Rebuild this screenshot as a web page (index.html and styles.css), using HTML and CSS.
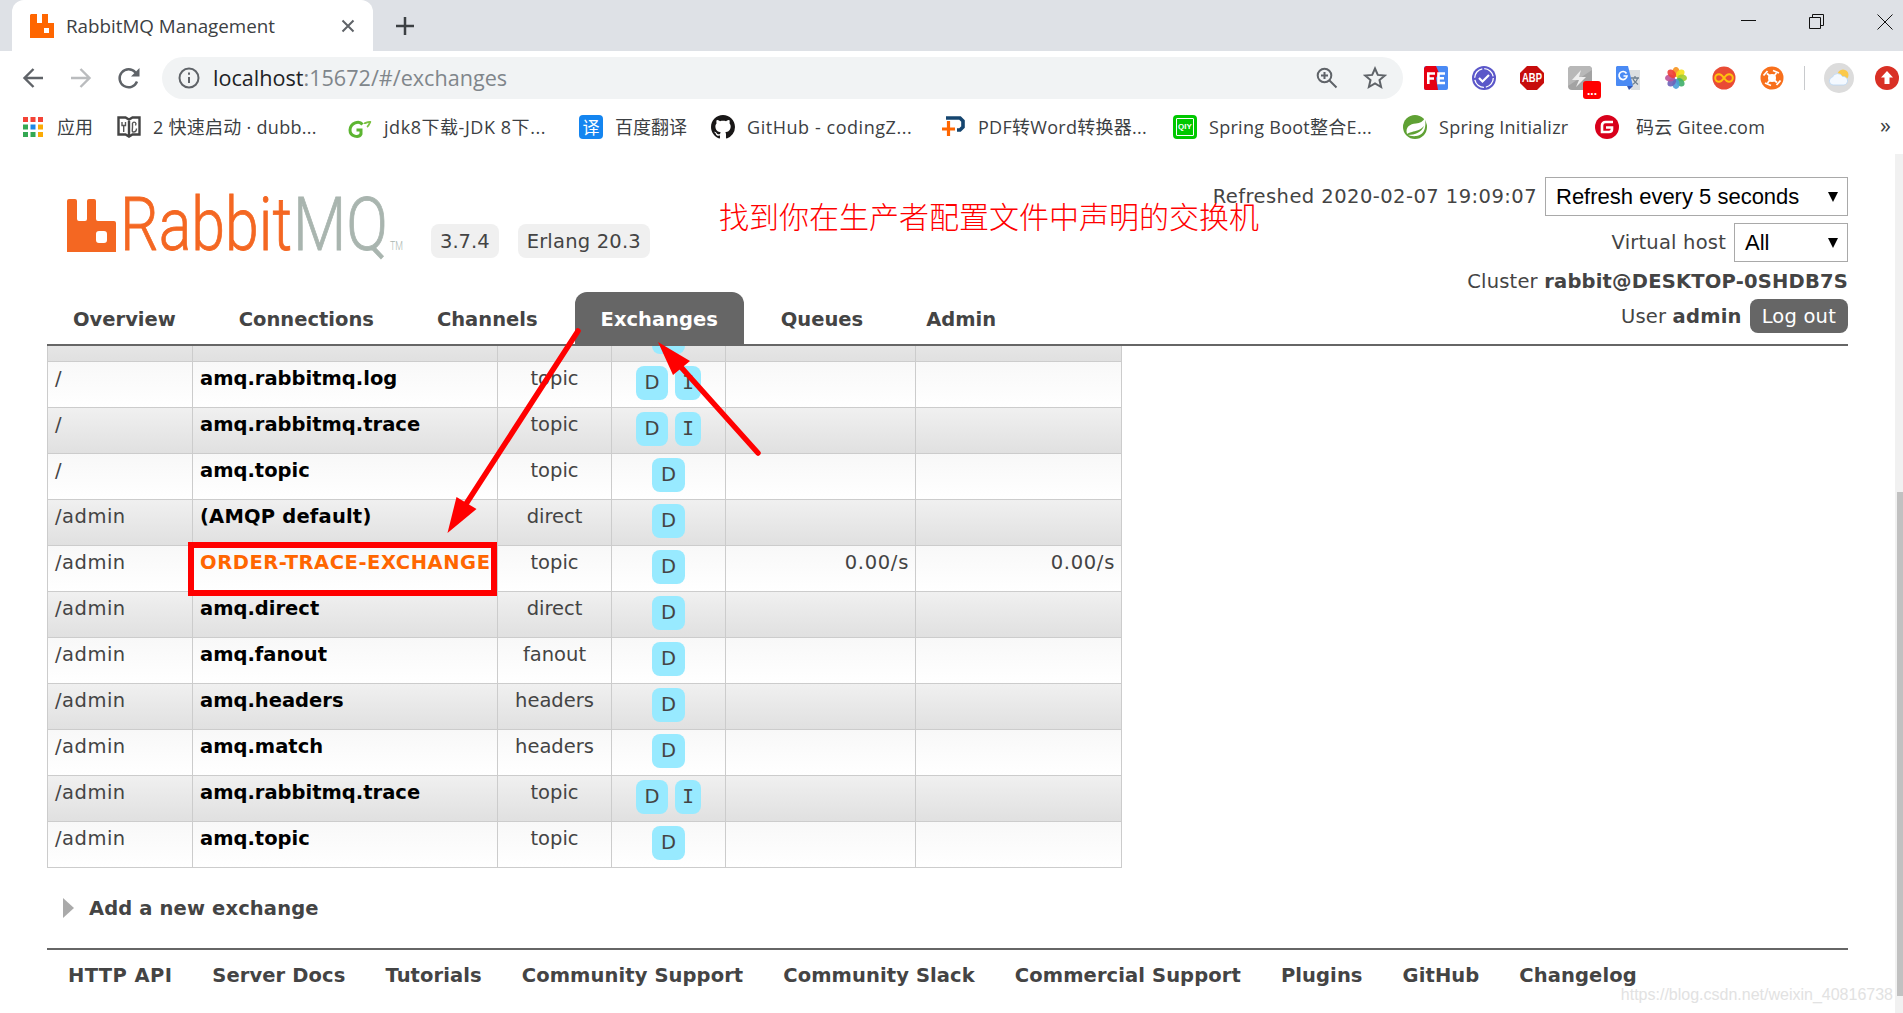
FILE: index.html
```html
<!DOCTYPE html>
<html>
<head>
	<meta charset="utf-8">
	<title>RabbitMQ Management</title>
	<link rel="stylesheet" href="styles.css">
</head>
<body>

	<!-- browser -->
	<div class="tabstrip">
		<div class="tab">
			<svg class="favicon" viewBox="0 0 24 24"><path fill="#ff6600" d="M1 0h6v9h5V0h6v9h6v15H0V1zM14 14v5h5v-5z" fill-rule="evenodd"/></svg>
			<span class="tab-title">RabbitMQ Management</span>
			<svg class="tab-close" viewBox="0 0 14 14"><path d="M1.500 1.500l11 11M12.500 1.500l-11 11"/></svg>
		</div>
		<svg class="tab-new" viewBox="0 0 18 18"><path d="M9 0v18M0 9h18"/></svg>
		<div class="window-buttons">
			<svg viewBox="0 0 16 16"><path d="M0 6.500h15"/></svg>
			<svg viewBox="0 0 16 16"><path d="M.5 3.500h11v11H.5zM3.500 3V.5h11v11H12"/></svg>
			<svg viewBox="0 0 16 16"><path d="M.5.5l15 15M15.500.5l-15 15"/></svg>
		</div>
	</div>

	<div class="toolbar">
		<svg class="nav-icon" viewBox="0 0 24 24"><path d="M22 12H4M12.500 3L3.500 12l9 9"/></svg>
		<svg class="nav-icon off" viewBox="0 0 24 24"><path d="M2 12h18M11.500 3l9 9-9 9"/></svg>
		<svg class="nav-icon" viewBox="0 0 24 24"><path d="M20 15.500A9 9 0 1 1 18.500 6.500L21 9"/><path d="M22.500 2v8.500H14z" fill="#5f6368" stroke="none"/></svg>
		<div class="address">
			<svg class="info" viewBox="0 0 22 22"><circle cx="11" cy="11" r="9.500"/><path d="M11 10v6M11 5.500v2.300"/></svg>
			<span class="url"><b>localhost</b>:15672/#/exchanges</span>
			<svg class="zoom" viewBox="0 0 22 22"><circle cx="8.500" cy="8.500" r="6.800"/><path d="M13.500 13.500l7 7M8.500 5v7M5 8.500h7"/></svg>
			<svg class="star" viewBox="0 0 24 24"><path d="M12 2.500l2.800 6.400 7 .6-5.300 4.600 1.600 6.900-6.100-3.700L5.900 21l1.600-6.900-5.300-4.600 7-.6z"/></svg>
		</div>
		<div class="extensions">
			<svg viewBox="0 0 24 24"><rect width="24" height="24" rx="2" fill="#4a8af4"/><path fill="#e60012" d="M2 0h10l3 7-3 5 2 12H2a2 2 0 0 1-2-2V2z"/><path d="M4.300 18V7.500H11M4 12.500h6M21 7.500h-6.500V17H21M14 12.300h6" fill="none" stroke="#fff" stroke-width="2.600"/></svg>
			<svg viewBox="0 0 24 24"><circle cx="12" cy="12" r="12" fill="#5b57c9"/><circle cx="12" cy="12" r="9.300" fill="none" stroke="#fff" stroke-width="1.300" stroke-dasharray="12.600 2"/><path d="M7 12l3.500 3.500L17 9" fill="none" stroke="#fff" stroke-width="2.200"/></svg>
			<svg viewBox="0 0 24 24"><path fill="#c70d0c" d="M7 0h10l7 7v10l-7 7H7l-7-7V7z"/><text x="2" y="16" textLength="20" lengthAdjust="spacingAndGlyphs" class="abp">ABP</text></svg>
			<div class="ext-badged">
				<svg viewBox="0 0 24 24"><rect width="24" height="24" rx="4" fill="#a3a3a3"/><path fill="#b8b8b8" d="M4 0h16a4 4 0 0 1 4 4L0 20V4a4 4 0 0 1 4-4z"/><path fill="#eee" d="M13 4L4 14h7l-3 7 10-10h-7z"/></svg>
				<span class="ext-badge">...</span>
			</div>
			<svg viewBox="0 0 24 24"><path fill="#dcdfe1" d="M9 4h15v20H15z"/><path fill="#4a8af4" d="M1 0h11l5 20H1a1 1 0 0 1-1-1V1z"/><path fill="#3357b5" d="M11 20h6l-4 4z"/><path d="M10.500 7.500A4 4 0 1 0 11 10H7.500" fill="none" stroke="#fff" stroke-width="1.700"/><path d="M15 12h8M19 10v2M21.500 12c-.5 3-2.500 5-5 6.500M17 13c1 2.500 3 4 5 5.500" fill="none" stroke="#6d7f8f" stroke-width="1.300"/></svg>
			<svg viewBox="0 0 24 24"><g fill-opacity=".9"><ellipse cx="12" cy="6" rx="3.600" ry="5" fill="#f7941d"/><ellipse cx="12" cy="6" rx="3.600" ry="5" fill="#f5e11a" transform="rotate(45 12 12)"/><ellipse cx="12" cy="6" rx="3.600" ry="5" fill="#a3cc2e" transform="rotate(90 12 12)"/><ellipse cx="12" cy="6" rx="3.600" ry="5" fill="#3fae6a" transform="rotate(135 12 12)"/><ellipse cx="12" cy="6" rx="3.600" ry="5" fill="#4a9fd8" transform="rotate(180 12 12)"/><ellipse cx="12" cy="6" rx="3.600" ry="5" fill="#6d62b8" transform="rotate(225 12 12)"/><ellipse cx="12" cy="6" rx="3.600" ry="5" fill="#bd5399" transform="rotate(270 12 12)"/><ellipse cx="12" cy="6" rx="3.600" ry="5" fill="#ee3e36" transform="rotate(315 12 12)"/></g></svg>
			<svg viewBox="0 0 24 24"><circle cx="12" cy="12" r="11.500" fill="#e94b35"/><path d="M12 12c-2-3-3.500-3.800-5-3.800a3.800 3.800 0 0 0 0 7.600c1.500 0 3-.8 5-3.800s3.500-3.800 5-3.800a3.800 3.800 0 0 1 0 7.600c-1.500 0-3-.8-5-3.800z" fill="none" stroke="#ffc20e" stroke-width="2"/></svg>
			<svg viewBox="0 0 24 24"><circle cx="12" cy="12" r="11.500" fill="#f8701c"/><circle cx="12" cy="12" r="4" fill="#fff"/><path d="M7 7.500l3 2.500M17 16.500L14 14M16.500 7L14 10M7.500 17l2.500-3M3.500 9.500L7.500 5M20.500 14.500l-4 4.500M13 4.500l6 2.500M11 19.500L5 17" fill="none" stroke="#fff" stroke-width="1.800"/></svg>
			<span class="sep"></span>
			<svg class="avatar" viewBox="0 0 30 30"><circle cx="15" cy="15" r="15" fill="#dcdcdc"/><circle cx="19" cy="12" r="5.500" fill="#fbc94a"/><path fill="#f4f9ff" stroke="#b9d6f2" stroke-width=".8" d="M9 22a4 4 0 0 1-.5-7.900 5.500 5.500 0 0 1 10-.6A4.300 4.300 0 0 1 20 22z"/></svg>
			<svg viewBox="0 0 24 24"><circle cx="12" cy="12" r="12" fill="#d93025"/><path fill="#fff" d="M12 5l6 6.500h-3.500V18h-5v-6.500H6z"/></svg>
		</div>
	</div>

	<div class="bookmarks">
		<div class="bm w94"><svg viewBox="0 0 24 24"><path fill="#f44336" d="M0 2h5v5H0zM7.500 2h5v5h-5zM15 2h5v5h-5z"/><path fill="#34a853" d="M0 9.500h5v5H0zM0 17h5v5H0zM7.500 17h5v5h-5z"/><path fill="#1e88e5" d="M7.500 9.500h5v5h-5z"/><path fill="#fbab05" d="M15 9.500h5v5h-5zM15 17h5v5h-5z"/></svg><span>应用</span></div>
		<div class="bm w231"><svg viewBox="0 0 24 24"><path d="M1.500 2.500h7l3.500 2 3.500-2h7v17h-7l-3.500 2-3.500-2h-7zM12 4.500V21" fill="none" stroke="#444" stroke-width="2.400"/><path d="M5 7v3.500h3.500V7M6.700 10.500V17M15.500 8c2-2 4.500 0 3 2.500M15.500 8v4c0 3-1 5 1 5s3-1 3-3.500" fill="none" stroke="#555" stroke-width="1.400"/></svg><span class="wide">2 快速启动 · dubb...</span></div>
		<div class="bm w231"><svg viewBox="0 0 24 24"><path d="M14.500 9.500C11 5 2.500 8 2 15c0 7 9 8 11 4v-4H8.500" fill="none" stroke="#5cb531" stroke-width="3"/><path d="M16 8c2 1 3-2 7-1-2 0-1 3-4 5" fill="none" stroke="#7cc243" stroke-width="1.800"/></svg><span class="wider">jdk8下载-JDK 8下...</span></div>
		<div class="bm w132"><i class="fanyi">译</i><span>百度翻译</span></div>
		<div class="bm w231"><svg viewBox="0 0 16 16"><path fill="#191717" d="M8 0C3.580 0 0 3.580 0 8c0 3.540 2.290 6.530 5.470 7.590.4.070.55-.17.55-.38 0-.19-.01-.82-.01-1.490-2.010.37-2.530-.49-2.690-.94-.09-.23-.48-.94-.82-1.130-.28-.15-.68-.52-.01-.53.63-.01 1.080.58 1.230.82.72 1.210 1.870.87 2.330.66.07-.52.28-.87.51-1.070-1.780-.2-3.640-.89-3.640-3.950 0-.87.31-1.590.82-2.150-.08-.2-.36-1.020.08-2.120 0 0 .67-.21 2.200.82.64-.18 1.320-.27 2-.27s1.360.09 2 .27c1.530-1.040 2.200-.82 2.200-.82.44 1.100.16 1.920.08 2.120.51.56.82 1.270.82 2.150 0 3.070-1.870 3.750-3.650 3.950.29.25.54.73.54 1.480 0 1.070-.01 1.930-.01 2.200 0 .21.15.46.55.38A8.010 8.010 0 0 0 16 8c0-4.420-3.580-8-8-8z"/></svg><span class="wider">GitHub - codingZ...</span></div>
		<div class="bm w231"><svg viewBox="0 0 24 24"><path d="M4 3h14l3 3v6l-3 3h-3" fill="none" stroke="#15456f" stroke-width="3.600"/><path d="M0 14h13M6.500 6v15" fill="none" stroke="#f60" stroke-width="3.200"/></svg><span class="wide">PDF转Word转换器...</span></div>
		<div class="bm w230"><i class="qiy">QIY</i><span class="wide">Spring Boot整合E...</span></div>
		<div class="bm w192"><svg viewBox="0 0 24 24"><circle cx="12" cy="12" r="12" fill="#5fa134"/><path fill="#fff" d="M22 3c1 7 1 17-9 18-3 .5-7-.5-8-1 7 0 14-3 16-9-3 4-9 5-12 6-3 .8-4 1.500-5 2-2-7 3-10 9-10.500 4-.5 7-2 9-5.500z"/></svg><span class="wide">Spring Initializr</span></div>
		<div class="bm gitee"><svg viewBox="0 0 24 24"><circle cx="12" cy="12" r="12" fill="#d8001b"/><path d="M18 7h-7.500C8.500 7 7 8.500 7 10.500V17h7c1.700 0 3-1.300 3-3v-1.500h-6" fill="none" stroke="#fff" stroke-width="2.600"/></svg><span class="wide">码云 Gitee.com</span></div>
		<span class="more">»</span>
	</div>

	<!-- management page -->
	<div class="page">
		<div class="main">
			<div class="head">
				<div class="brand">
					<svg class="logo" viewBox="0 0 336 60">
						<path fill="#f46722" fill-rule="evenodd" d="M2 2h6q2 0 2 2v18q0 2 2 2h6q2 0 2-2V4q0-2 2-2h5q2 0 2 2v18q0 2 2 2h16q2 0 2 2v29H0V4q0-2 2-2zM32 34q-3 0-3 3v6q0 3 3 3h5q3 0 3-3v-6q0-3-3-3z"/>
						<text x="53" y="53" textLength="172" lengthAdjust="spacingAndGlyphs" class="rabbit">Rabbit</text>
						<text x="226" y="53" textLength="95" lengthAdjust="spacingAndGlyphs" class="mq">MQ</text>
						<text x="323" y="53" textLength="13" lengthAdjust="spacingAndGlyphs" class="tm">TM</text>
					</svg>
					<span class="version">3.7.4</span>
					<span class="version erlang">Erlang 20.3</span>
				</div>
				<div class="status">
					<div class="status-row refreshed"><span>Refreshed 2020-02-07 19:09:07</span><div class="select long"><span>Refresh every 5 seconds</span><i></i></div></div>
					<div class="status-row"><span>Virtual host</span><div class="select"><span>All</span><i></i></div></div>
					<div class="status-row cluster"><span>Cluster <b>rabbit@DESKTOP-0SHDB7S</b></span></div>
					<div class="status-row user"><span>User <b>admin</b></span><a class="logout">Log out</a></div>
				</div>
			</div>

			<div class="tabs">
				<a>Overview</a>
				<a>Connections</a>
				<a>Channels</a>
				<a class="selected">Exchanges</a>
				<a>Queues</a>
				<a>Admin</a>
			</div>

			<div class="scroll">
				<table class="list">
					<colgroup><col class="c1"><col class="c2"><col class="c3"><col class="c4"><col class="c5"><col class="c6"></colgroup>
					<tr class="alt"><td></td><td></td><td></td><td><span>D</span></td><td></td><td></td></tr>
					<tr><td>/</td><td><a>amq.rabbitmq.log</a></td><td>topic</td><td><span>D</span><span>I</span></td><td></td><td></td></tr>
					<tr class="alt"><td>/</td><td><a>amq.rabbitmq.trace</a></td><td>topic</td><td><span>D</span><span>I</span></td><td></td><td></td></tr>
					<tr><td>/</td><td><a>amq.topic</a></td><td>topic</td><td><span>D</span></td><td></td><td></td></tr>
					<tr class="alt"><td>/admin</td><td><a class="default">(AMQP default)</a></td><td>direct</td><td><span>D</span></td><td></td><td></td></tr>
					<tr><td>/admin</td><td><a class="hover">ORDER-TRACE-EXCHANGE</a></td><td>topic</td><td><span>D</span></td><td>0.00/s</td><td>0.00/s</td></tr>
					<tr class="alt"><td>/admin</td><td><a>amq.direct</a></td><td>direct</td><td><span>D</span></td><td></td><td></td></tr>
					<tr><td>/admin</td><td><a>amq.fanout</a></td><td>fanout</td><td><span>D</span></td><td></td><td></td></tr>
					<tr class="alt"><td>/admin</td><td><a>amq.headers</a></td><td>headers</td><td><span>D</span></td><td></td><td></td></tr>
					<tr><td>/admin</td><td><a>amq.match</a></td><td>headers</td><td><span>D</span></td><td></td><td></td></tr>
					<tr class="alt"><td>/admin</td><td><a>amq.rabbitmq.trace</a></td><td>topic</td><td><span>D</span><span>I</span></td><td></td><td></td></tr>
					<tr><td>/admin</td><td><a>amq.topic</a></td><td>topic</td><td><span>D</span></td><td></td><td></td></tr>
				</table>
			</div>

			<div class="add"><i></i><span>Add a new exchange</span></div>

			<div class="footer">
				<a class="api">HTTP API</a>
				<a>Server Docs</a>
				<a>Tutorials</a>
				<a>Community Support</a>
				<a>Community Slack</a>
				<a>Commercial Support</a>
				<a>Plugins</a>
				<a>GitHub</a>
				<a>Changelog</a>
			</div>
		</div>
		<div class="scrollbar"><div class="thumb"></div></div>
	</div>

	<!-- red notes drawn over the page -->
	<div class="note">找到你在生产者配置文件中声明的交换机</div>
	<div class="box"></div>
	<svg class="arrows" viewBox="0 0 1903 1013">
		<path class="shaft" d="M578 331L466 504M758 453L680 366"/>
		<path class="tip" d="M447.500 533l9-36 20 12zM658 342l32 19-17 14z"/>
	</svg>
	<div class="watermark">https://blog.csdn.net/weixin_40816738</div>

</body>
</html>
```
FILE: styles.css
```css
* {
	box-sizing: border-box;
}

body {
	margin: 0;
	width: 1903px;
	height: 1013px;
	overflow: hidden;
	position: relative;
	background: #fff;
	color: #444;
	font: 19.5px "DejaVu Sans", Verdana, sans-serif;
}

svg {
	display: block;
	flex: none;
}

/* browser */
.tabstrip, .toolbar, .bookmarks {
	display: flex;
	align-items: center;
	font-family: "Open Sans", "Noto Sans CJK SC", sans-serif;
}

.tabstrip {
	height: 51px;
	background: #dee1e6;
	padding-left: 12px;
}

.tab {
	display: flex;
	align-items: center;
	width: 361px;
	height: 51px;
	padding: 0 18px;
	background: #fff;
	border-radius: 12px 12px 0 0;
}

.favicon {
	width: 24px;
	height: 24px;
}

.tab-title {
	flex: 1;
	margin-left: 12px;
	font-size: 18.8px;
	color: #3c4043;
}

.tab-close {
	width: 14px;
	height: 14px;
	fill: none;
	stroke: #5f6368;
	stroke-width: 2;
}

.tab-new {
	width: 18px;
	height: 18px;
	margin-left: 23px;
	fill: none;
	stroke: #3c4043;
	stroke-width: 2.5;
}

.window-buttons {
	display: flex;
	gap: 52px;
	margin: -8px 10px 0 auto;
}

.window-buttons svg {
	width: 16px;
	height: 16px;
	fill: none;
	stroke: #111;
	stroke-width: 1;
}

.toolbar {
	height: 54px;
	padding-left: 21px;
}

.nav-icon {
	width: 24px;
	height: 24px;
	margin-right: 24px;
	fill: none;
	stroke: #5f6368;
	stroke-width: 2.4;
}

.nav-icon.off {
	stroke: #babcbe;
}

.address {
	display: flex;
	align-items: center;
	width: 1241px;
	height: 42px;
	margin-left: -3px;
	padding: 0 16px;
	border-radius: 21px;
	background: #f1f3f4;
}

.address svg {
	fill: none;
	stroke: #5f6368;
	stroke-width: 2;
}

.info {
	width: 22px;
	height: 22px;
}

.url {
	flex: 1;
	margin: -2px 0 0 13px;
	font-size: 21.6px;
	color: #80868b;
}

.url b {
	font-weight: normal;
	color: #202124;
}

.zoom {
	width: 22px;
	height: 22px;
	margin-right: 25px;
}

.star {
	width: 24px;
	height: 24px;
}

.extensions {
	display: flex;
	align-items: center;
	gap: 24px;
	margin-left: 21px;
}

.extensions svg {
	width: 24px;
	height: 24px;
}

.extensions .avatar {
	width: 30px;
	height: 30px;
	margin: 0 -3px 0 -6px;
}

.abp {
	font: bold 12px "Liberation Sans", Arial, sans-serif;
	fill: #fff;
}

.ext-badged {
	position: relative;
}

.ext-badge {
	position: absolute;
	left: 15px;
	top: 15px;
	width: 18px;
	height: 18px;
	border-radius: 3px;
	background: #f00;
	color: #fff;
	font: bold 12px/20px "Liberation Sans", Arial, sans-serif;
	text-align: center;
}

.sep {
	width: 1px;
	height: 24px;
	margin: 0 1px 0 -4px;
	background: #c8cacd;
}

.bookmarks {
	height: 43px;
	padding-left: 23px;
	font-size: 18px;
	line-height: 24px;
	color: #3c4043;
}

.bm {
	display: flex;
	align-items: center;
	gap: 12px;
	white-space: nowrap;
}

.bm svg, .bm i {
	width: 24px;
	height: 24px;
}

.bm .wide {
	letter-spacing: .28px;
}

.bm .wider {
	letter-spacing: .55px;
}

.w94 { width: 94px; }
.w132 { width: 132px; }
.w192 { width: 192px; }
.w230 { width: 230px; }
.w231 { width: 231px; }

.w94 {
	gap: 10px;
}

.gitee {
	gap: 17px;
}

.fanyi, .qiy {
	border-radius: 4px;
	background: #1485f0;
	color: #fff;
	font: 17px/24px "Noto Sans CJK SC", sans-serif;
	text-align: center;
}

.bm .qiy {
	border: 3px solid #00c800;
	background: #00c800;
	font: bold 8px/18px "Liberation Sans", Arial, sans-serif;
	box-shadow: inset 0 0 0 1px #fff;
}

.more {
	margin: -6px 12px 0 auto;
	font-size: 22px;
}

/* management page */
.page {
	display: flex;
	height: 865px;
}

.main {
	width: 1801px;
	margin-left: 47px;
}

.head {
	display: flex;
	justify-content: space-between;
	height: 144px;
	padding-top: 29px;
}

.brand {
	display: flex;
	padding-left: 20px;
}

.logo {
	width: 336px;
	height: 60px;
	margin-top: 20px;
	font: 300 74px Roboto, sans-serif;
	overflow: visible;
}

.rabbit {
	fill: #f46722;
	stroke: #f46722;
	stroke-width: .8;
}

.mq, .tm {
	fill: #a9b5af;
}

.mq {
	stroke: #a9b5af;
	stroke-width: .8;
}

.tm {
	font-size: 12px;
}

.version {
	height: 34px;
	margin: 47px -9px 0 28px;
	padding: 0 9px;
	border-radius: 8px;
	background: #f0f0f0;
	line-height: 36px;
}

.erlang {
	letter-spacing: .2px;
}

.status-row {
	display: flex;
	justify-content: flex-end;
	align-items: center;
	gap: 8px;
	height: 39px;
	margin-bottom: 7px;
	letter-spacing: .2px;
}

.refreshed {
	letter-spacing: .45px;
}

.select {
	display: flex;
	justify-content: space-between;
	align-items: center;
	width: 114px;
	height: 39px;
	padding: 0 9px 0 10px;
	border: 1px solid #a9a9a9;
	color: #000;
	font: 22px "Liberation Sans", Arial, sans-serif;
	letter-spacing: 0;
}

.select.long {
	width: 303px;
}

.select i {
	border: 5px solid transparent;
	border-top: 10px solid #000;
	border-bottom: 0;
}

.status-row.cluster {
	height: 24px;
}

.status-row.user {
	height: 34px;
	margin-top: -1px;
}

.logout {
	padding: 0 12px;
	border-radius: 8px;
	background: #666;
	color: #fff;
	line-height: 35px;
	height: 34px;
}

.tabs {
	display: flex;
	gap: 11px;
	height: 54px;
	border-bottom: 2px solid #666;
	font-weight: bold;
}

.tabs a {
	padding: 0 26px;
	line-height: 55px;
}

.tabs .selected {
	border-radius: 12px 12px 0 0;
	background: #666;
	color: #fff;
}

.scroll {
	overflow: hidden;
	height: 522px;
}

.list {
	width: 1075px;
	margin-top: -31px;
	table-layout: fixed;
	border-collapse: collapse;
}

.c1 { width: 145px; }
.c2 { width: 305px; }
.c3 { width: 114px; }
.c4 { width: 114px; }
.c5 { width: 190px; }
.c6 { width: 206px; }

.list tr {
	height: 46px;
	background: linear-gradient(#f8f8f8, #fff);
}

.list tr.alt {
	background: linear-gradient(#f0f0f0, #e0e0e0);
}

.list td {
	padding: 4px 6px 0 7px;
	border: 1px solid #ccc;
	line-height: 25px;
	vertical-align: top;
	white-space: nowrap;
}

.list td:first-child {
	letter-spacing: .5px;
}

.list td:nth-child(3), .list td:nth-child(4) {
	padding: 4px 0 0;
	text-align: center;
}

.list td:nth-child(n+5) {
	text-align: right;
	letter-spacing: .7px;
}

.list a {
	font-weight: bold;
	color: #000;
}

.list a.default {
	letter-spacing: .2px;
}

.list a.hover {
	color: #f60;
	letter-spacing: .55px;
}

.list span {
	display: inline-block;
	padding: 0 8.500px;
	border-radius: 8px;
	background: #98eaff;
	line-height: 34px;
}

/* the mono face has the barred I */
.list span + span {
	margin-left: 7px;
	padding: 0 7px;
	font-family: "DejaVu Sans Mono", monospace;
}

.add {
	display: flex;
	align-items: center;
	height: 80px;
	padding-left: 16px;
	font-weight: bold;
	letter-spacing: .14px;
}

.add i {
	margin-right: 15px;
	border: 10px solid transparent;
	border-left: 11px solid #aaa;
	border-right: 0;
}

.footer {
	display: flex;
	gap: 40px;
	padding-left: 21px;
	border-top: 2px solid #666;
	font-weight: bold;
	line-height: 52px;
	letter-spacing: .1px;
	white-space: nowrap;
}

.footer .api {
	letter-spacing: .4px;
}

.scrollbar {
	width: 8px;
	height: 859px;
	margin: 6px 0 0 auto;
	padding: 338px 0 0 2px;
	background: #f1f1f1;
}

.thumb {
	height: 504px;
	background: #c1c1c1;
}

/* notes */
.note {
	position: absolute;
	left: 719px;
	top: 197px;
	color: #f00;
	font: 300 30px/36px "Noto Sans CJK SC", serif;
	white-space: nowrap;
}

.box {
	position: absolute;
	left: 188px;
	top: 542px;
	width: 309px;
	height: 54px;
	border: 6px solid #f00;
}

.arrows {
	position: absolute;
	left: 0;
	top: 0;
	width: 1903px;
	height: 1013px;
}

.shaft {
	stroke: #f00;
	stroke-width: 5.5;
	stroke-linecap: round;
}

.tip {
	fill: #f00;
}

.watermark {
	position: absolute;
	right: 10px;
	bottom: 8px;
	color: #e2e2e2;
	font: 16px/20px "Liberation Sans", Arial, sans-serif;
}
```
